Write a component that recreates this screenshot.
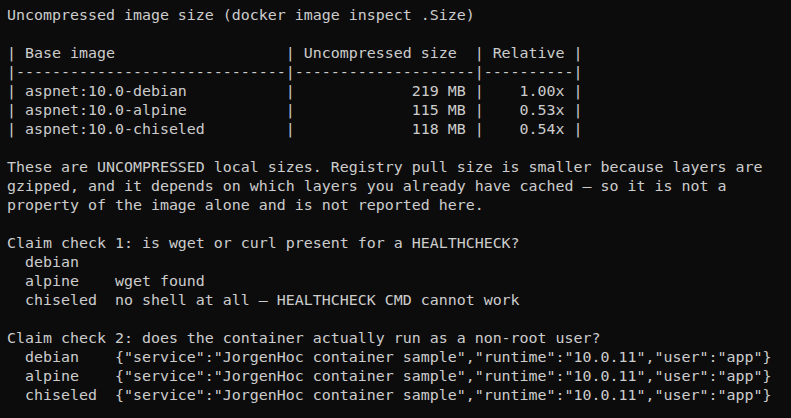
const rows = [
  { name: "aspnet:10.0-debian", size: "219 MB", rel: "1.00x" },
  { name: "aspnet:10.0-alpine", size: "115 MB", rel: "0.53x" },
  { name: "aspnet:10.0-chiseled", size: "118 MB", rel: "0.54x" },
]

const json = '{"service":"JorgenHoc container sample","runtime":"10.0.11","user":"app"}'

const lines: string[] = [
  "Uncompressed image size (docker image inspect .Size)",
  "",
  "| " + "Base image".padEnd(29) + "|" + " Uncompressed size  " + "|" + " Relative " + "|",
  "|" + "-".repeat(30) + "|" + "-".repeat(20) + "|" + "-".repeat(10) + "|",
  ...rows.map((r) => "| " + r.name.padEnd(29) + "|" + r.size.padStart(19) + " |" + r.rel.padStart(9) + " |"),
  "",
  "These are UNCOMPRESSED local sizes. Registry pull size is smaller because layers are",
  "gzipped, and it depends on which layers you already have cached \u2014 so it is not a",
  "property of the image alone and is not reported here.",
  "",
  "Claim check 1: is wget or curl present for a HEALTHCHECK?",
  "  debian",
  "  " + "alpine".padEnd(10) + "wget found",
  "  " + "chiseled".padEnd(10) + "no shell at all \u2014 HEALTHCHECK CMD cannot work",
  "",
  "Claim check 2: does the container actually run as a non-root user?",
  "  " + "debian".padEnd(10) + json,
  "  " + "alpine".padEnd(10) + json,
  "  " + "chiseled".padEnd(10) + json,
]

export default function App() {
  return (
    <div className="min-h-screen bg-[#0c0c0c] pt-[6px] pl-[7px]">
      <pre className="font-['DejaVu_Sans_Mono',monospace] text-[14.95px] leading-[19px] text-[#cccccc] whitespace-pre">
        {lines.join("\n")}
      </pre>
    </div>
  )
}
